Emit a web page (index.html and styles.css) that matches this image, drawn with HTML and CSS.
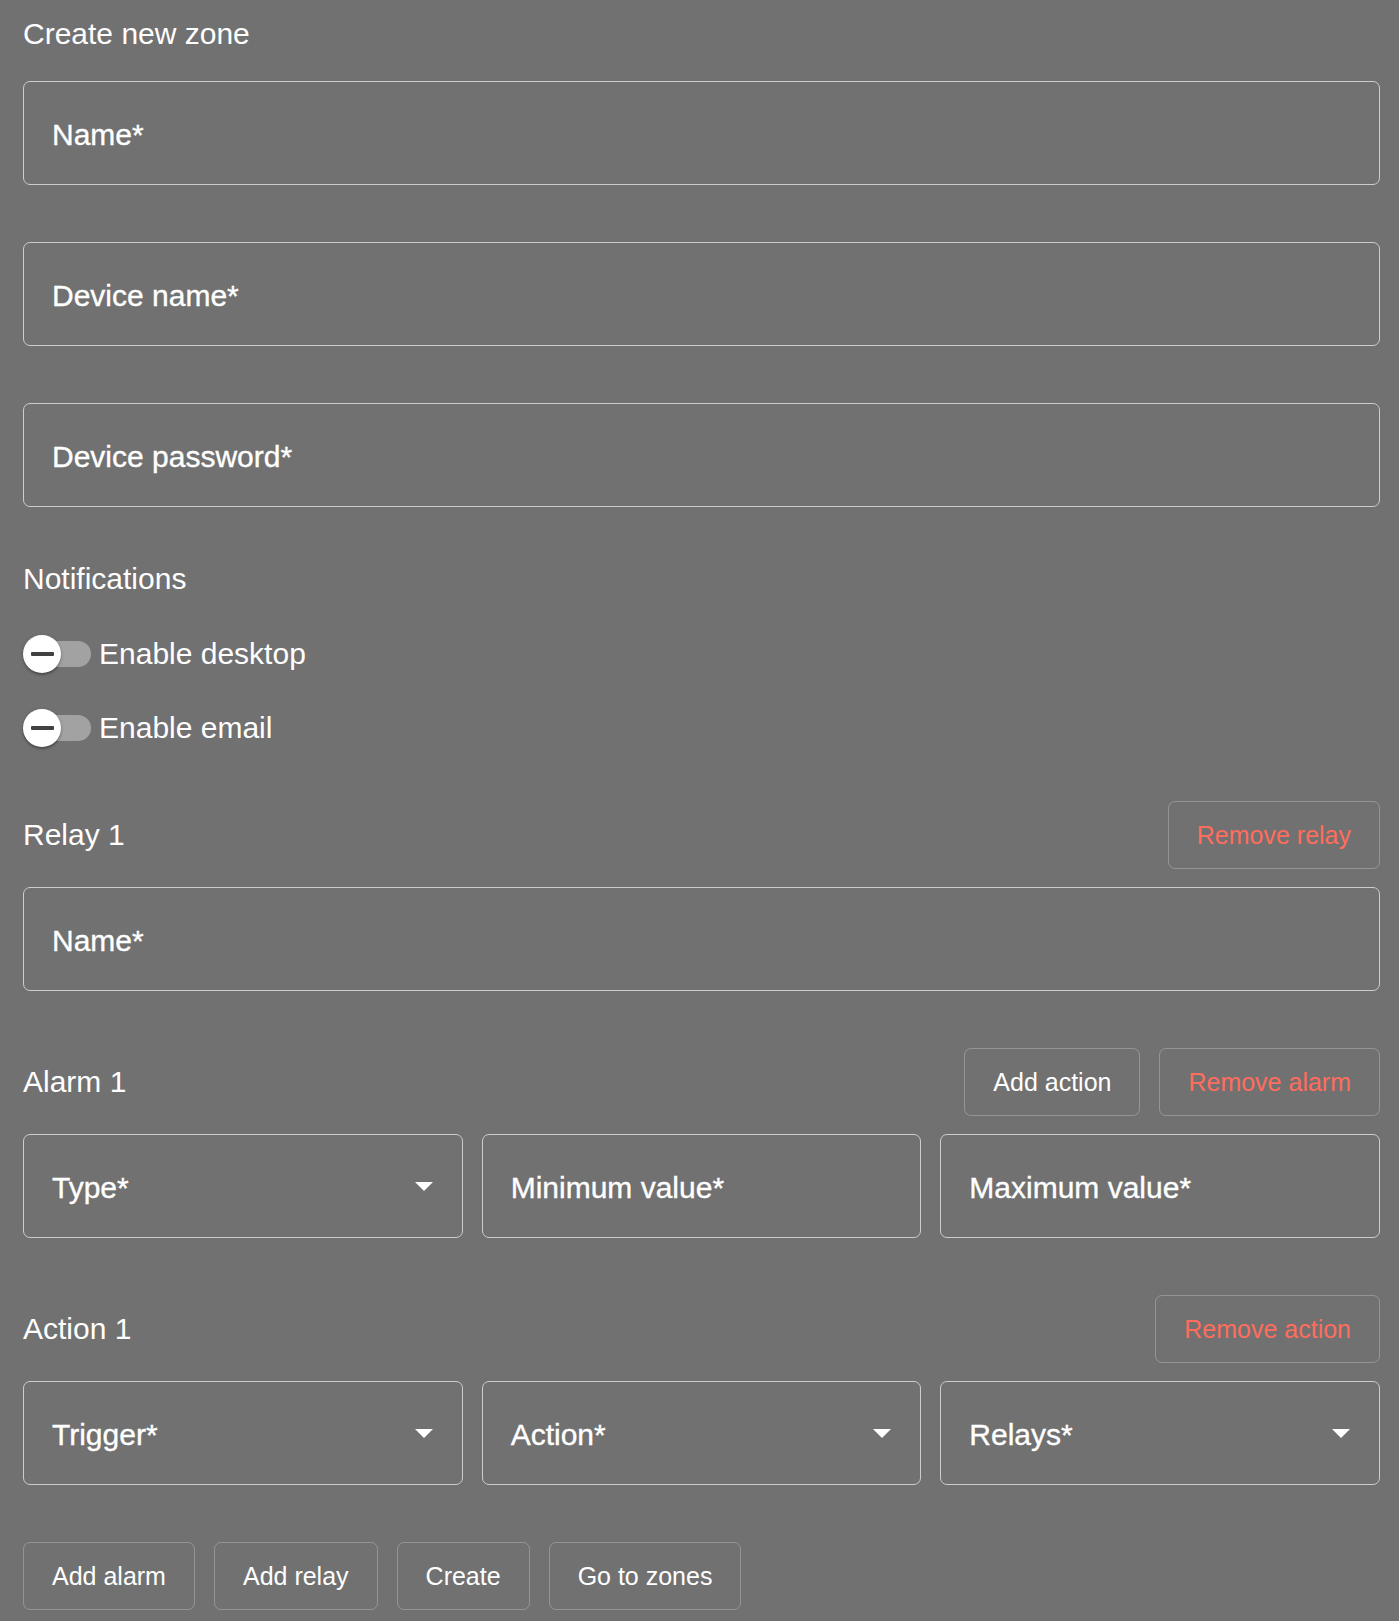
FILE: index.html
```html
<!DOCTYPE html>
<html lang="en">
<head>
<meta charset="utf-8">
<title>Create new zone</title>
<link rel="stylesheet" href="styles.css">
</head>
<body>
<main class="page">
  <h1 class="title">Create new zone</h1>

  <div class="field"><span class="label">Name*</span></div>
  <div class="field gap"><span class="label">Device name*</span></div>
  <div class="field gap"><span class="label">Device password*</span></div>

  <h2 class="heading notif">Notifications</h2>

  <div class="toggle-row first">
    <span class="switch"><span class="track"></span><span class="thumb"><span class="minus"></span></span></span>
    <span class="toggle-text">Enable desktop</span>
  </div>
  <div class="toggle-row second">
    <span class="switch"><span class="track"></span><span class="thumb"><span class="minus"></span></span></span>
    <span class="toggle-text">Enable email</span>
  </div>

  <div class="section-head relay-head">
    <h2 class="heading">Relay 1</h2>
    <div class="head-actions"><button class="btn danger">Remove relay</button></div>
  </div>
  <div class="field near"><span class="label">Name*</span></div>

  <div class="section-head gap">
    <h2 class="heading">Alarm 1</h2>
    <div class="head-actions">
      <button class="btn">Add action</button>
      <button class="btn danger">Remove alarm</button>
    </div>
  </div>
  <div class="grid3 near">
    <div class="field select"><span class="label">Type*</span><span class="arrow"></span></div>
    <div class="field"><span class="label">Minimum value*</span></div>
    <div class="field"><span class="label">Maximum value*</span></div>
  </div>

  <div class="section-head gap">
    <h2 class="heading">Action 1</h2>
    <div class="head-actions"><button class="btn danger">Remove action</button></div>
  </div>
  <div class="grid3 near">
    <div class="field select"><span class="label">Trigger*</span><span class="arrow"></span></div>
    <div class="field select"><span class="label">Action*</span><span class="arrow"></span></div>
    <div class="field select"><span class="label">Relays*</span><span class="arrow"></span></div>
  </div>

  <div class="bottom-actions">
    <button class="btn">Add alarm</button>
    <button class="btn">Add relay</button>
    <button class="btn">Create</button>
    <button class="btn">Go to zones</button>
  </div>
</main>
</body>
</html>
```
FILE: styles.css
```css
html, body {
  margin: 0;
  padding: 0;
  background: #717171;
}
body {
  font-family: "Liberation Sans", Arial, sans-serif;
  color: #ffffff;
}
.page {
  padding: 17px 19px 0 23px;
  width: 1357px;
}
.title {
  margin: 0;
  font-size: 30px;
  line-height: 34px;
  font-weight: normal;
}
.heading {
  margin: 0;
  font-size: 30px;
  line-height: 34px;
  font-weight: normal;
}
.field {
  box-sizing: border-box;
  height: 104px;
  border: 1px solid #cdcdcd;
  border-radius: 7px;
  display: flex;
  align-items: center;
  padding-left: 28px;
  padding-top: 3px;
  position: relative;
  margin-top: 30px;
}
.field.gap { margin-top: 57px; }
.field.near { margin-top: 18px; }
.label {
  font-size: 30px;
  line-height: 34px;
  color: #ffffff;
  -webkit-text-stroke: 0.35px #ffffff;
}
.select .arrow {
  position: absolute;
  right: 29px;
  top: 47px;
  width: 0;
  height: 0;
  border-left: 9.5px solid transparent;
  border-right: 9.5px solid transparent;
  border-top: 9.5px solid #ffffff;
}
.notif { margin-top: 55px; }
.toggle-row {
  display: flex;
  align-items: center;
  height: 38px;
}
.toggle-row.first { margin-top: 39px; }
.toggle-row.second { margin-top: 36px; }
.switch {
  position: relative;
  width: 68px;
  height: 38px;
  flex: none;
}
.track {
  position: absolute;
  left: 5px;
  top: 6px;
  width: 63px;
  height: 26px;
  border-radius: 13px;
  background: #a2a2a2;
}
.thumb {
  position: absolute;
  left: 0;
  top: 0;
  width: 38px;
  height: 38px;
  border-radius: 50%;
  background: #ffffff;
  box-shadow: 0 2px 2px rgba(0,0,0,0.25), 0 1px 4px rgba(0,0,0,0.15);
  display: flex;
  align-items: center;
  justify-content: center;
}
.minus {
  width: 23px;
  height: 4px;
  background: #414141;
  border-radius: 1px;
}
.toggle-text {
  margin-left: 8px;
  font-size: 30px;
  line-height: 34px;
}
.section-head {
  display: flex;
  align-items: center;
  justify-content: space-between;
  height: 68px;
}
.section-head.relay-head { margin-top: 54px; }
.section-head.gap { margin-top: 57px; }
.head-actions {
  display: flex;
  gap: 19px;
}
.btn {
  box-sizing: border-box;
  height: 68px;
  padding: 0 28px;
  border: 1px solid rgba(255,255,255,0.25);
  border-radius: 7px;
  background: transparent;
  color: #ffffff;
  font-family: "Liberation Sans", Arial, sans-serif;
  font-size: 25px;
  cursor: pointer;
}
.btn.danger { color: #ff6d5d; }
.grid3 {
  display: grid;
  grid-template-columns: 1fr 1fr 1fr;
  gap: 19px;
}
.grid3.near { margin-top: 18px; }
.grid3 .field { margin-top: 0; }
.bottom-actions {
  display: flex;
  gap: 19px;
  margin-top: 57px;
}
```
